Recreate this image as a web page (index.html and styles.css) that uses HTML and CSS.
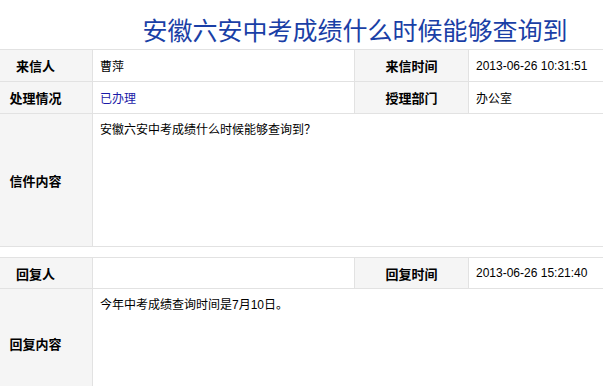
FILE: index.html
```html
<!DOCTYPE html>
<html lang="zh-CN">
<head>
    <meta charset="UTF-8">
    <meta name="viewport" content="width=device-width, initial-scale=1.0">
    <title>安徽六安中考成绩什么时候能够查询到</title>
    <link rel="stylesheet" href="styles.css">
</head>
<body>
    <div class="page">
        <h1 class="title">安徽六安中考成绩什么时候能够查询到</h1>

        <table class="info">
            <colgroup>
                <col class="c-label">
                <col class="c-value">
                <col class="c-label">
                <col>
            </colgroup>
            <tr class="row">
                <th>来信人</th>
                <td>曹萍</td>
                <th>来信时间</th>
                <td>2013-06-26 10:31:51</td>
            </tr>
            <tr class="row">
                <th>处理情况</th>
                <td><a href="#" class="state">已办理</a></td>
                <th>授理部门</th>
                <td>办公室</td>
            </tr>
            <tr class="letter">
                <th>信件内容</th>
                <td colspan="3">安徽六安中考成绩什么时候能够查询到？</td>
            </tr>
        </table>

        <table class="info">
            <colgroup>
                <col class="c-label">
                <col class="c-value">
                <col class="c-label">
                <col>
            </colgroup>
            <tr class="row reply-head">
                <th>回复人</th>
                <td></td>
                <th>回复时间</th>
                <td>2013-06-26 15:21:40</td>
            </tr>
            <tr class="reply">
                <th>回复内容</th>
                <td colspan="3">今年中考成绩查询时间是7月10日。</td>
            </tr>
        </table>
    </div>
</body>
</html>
```

FILE: styles.css
```css
body {
    margin: 0;
    background-color: #ffffff;
    color: #000000;
    font-family: "Liberation Sans", "Noto Sans CJK SC", sans-serif;
    font-size: 12px;
    overflow: hidden;
}
.page {
    width: 630px;
    margin-left: -22px;
}
.title {
    margin: 0;
    padding: 14px 0 0 124px;
    height: 35px;
    line-height: 30px;
    text-align: center;
    font-family: "Noto Sans CJK SC", sans-serif;
    font-size: 25px;
    font-weight: normal;
    color: #1a3fa6;
}
.info {
    width: 630px;
    border-collapse: collapse;
    table-layout: fixed;
}
.info + .info {
    margin-top: 10px;
}
.c-label {
    width: 114px;
}
.c-value {
    width: 262px;
}
.info th, .info td {
    border: 1px solid #e2e2e2;
    padding: 0 7px;
}
.info th {
    background-color: #f5f5f5;
    font-family: "Noto Sans CJK SC", sans-serif;
    font-size: 13px;
    font-weight: bold;
    text-align: center;
}
.info td {
    text-align: left;
    vertical-align: middle;
    white-space: nowrap;
}
.row {
    height: 32px;
}
.reply-head {
    height: 31px;
}
.letter {
    height: 133px;
}
.letter td, .reply td {
    vertical-align: top;
    padding-top: 6px;
}
.reply {
    height: 110px;
}
.state {
    color: #1a1aa8;
    text-decoration: none;
}
```
